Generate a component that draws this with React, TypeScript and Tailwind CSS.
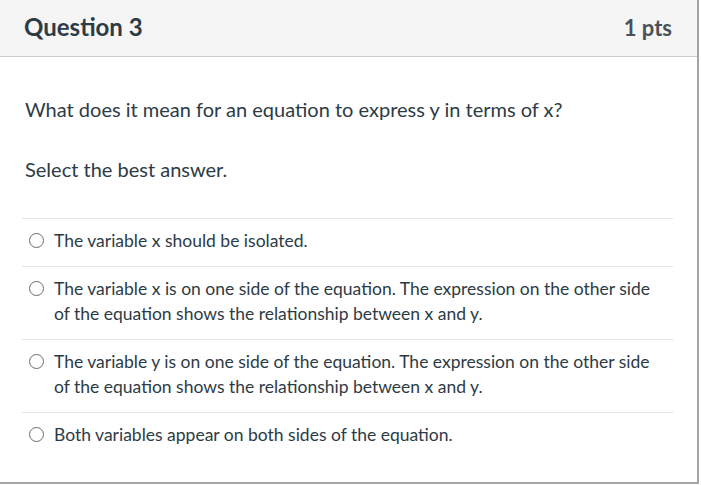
import React, { useState } from 'react';

const answers = [
  'The variable x should be isolated.',
  'The variable x is on one side of the equation. The expression on the other side of the equation shows the relationship between x and y.',
  'The variable y is on one side of the equation. The expression on the other side of the equation shows the relationship between x and y.',
  'Both variables appear on both sides of the equation.',
];

export default function App() {
  const [picked, setPicked] = useState<number | null>(null);

  return (
    <div className="w-[701px] h-[485px] bg-white font-['Lato',sans-serif] text-[#2d3b45]">
      <div className="w-[699px] h-[484px] border-r-2 border-b-2 border-[#a5a5a5] bg-white">
        <div className="h-[57px] bg-[#f5f5f5] border-b border-[#c7cdd1] flex items-center justify-between pl-6 pr-[25px] pb-[2px]">
          <h2 className="text-[24px] font-bold">Question 3</h2>
          <span className="text-[22px] font-bold text-[#4a5258]">1 pts</span>
        </div>
        <div className="pt-[39px] px-[22px]">
          <p className="text-[20px] leading-[27px] pl-[3px]">What does it mean for an equation to express y in terms of x?</p>
          <p className="text-[20px] leading-[27px] pl-[3px] mt-[33px]">Select the best answer.</p>
          <div className="mt-[35px] w-[651px]">
            {answers.map((a, i) => (
              <label
                key={i}
                className="flex items-start border-t border-[#e3e3e3] pt-[9px] pb-[13px] cursor-pointer"
                onClick={() => setPicked(i)}
              >
                <span className="mt-[5px] ml-[7px] mr-[10px] w-[15px] h-[15px] rounded-full border border-[#6b6b6b] flex items-center justify-center shrink-0">
                  {picked === i && <span className="w-[7px] h-[7px] rounded-full bg-[#2d3b45]" />}
                </span>
                <span className="max-w-[602px] text-[17.5px] leading-[25px]">{a}</span>
              </label>
            ))}
          </div>
        </div>
      </div>
    </div>
  );
}
